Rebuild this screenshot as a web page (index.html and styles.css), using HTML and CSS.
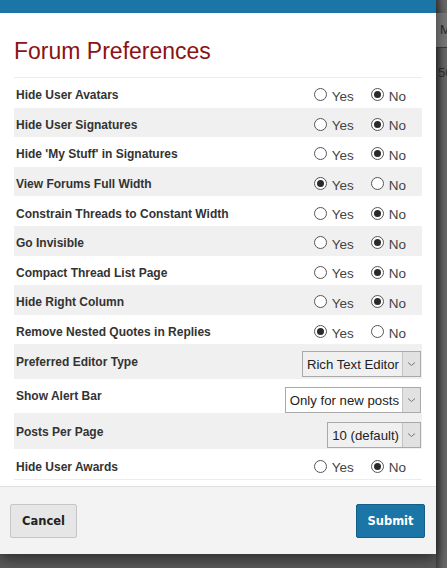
FILE: index.html
```html
<!DOCTYPE html>
<html>
<head>
<meta charset="utf-8">
<link rel="stylesheet" href="styles.css">
</head>
<body>
<div class="page">
  <div class="modal">
    <div class="modal-top"></div>
    <div class="modal-body">
      <h1 class="title">Forum Preferences</h1>
      <div class="prefs">
        <div class="row">
          <span class="label">Hide User Avatars</span>
          <span class="radios"><label class="opt"><input type="radio" name="r1"><span>Yes</span></label><label class="opt"><input type="radio" name="r1" checked><span>No</span></label></span>
        </div>
        <div class="row alt">
          <span class="label">Hide User Signatures</span>
          <span class="radios"><label class="opt"><input type="radio" name="r2"><span>Yes</span></label><label class="opt"><input type="radio" name="r2" checked><span>No</span></label></span>
        </div>
        <div class="row">
          <span class="label">Hide 'My Stuff' in Signatures</span>
          <span class="radios"><label class="opt"><input type="radio" name="r3"><span>Yes</span></label><label class="opt"><input type="radio" name="r3" checked><span>No</span></label></span>
        </div>
        <div class="row alt">
          <span class="label">View Forums Full Width</span>
          <span class="radios"><label class="opt"><input type="radio" name="r4" checked><span>Yes</span></label><label class="opt"><input type="radio" name="r4"><span>No</span></label></span>
        </div>
        <div class="row">
          <span class="label">Constrain Threads to Constant Width</span>
          <span class="radios"><label class="opt"><input type="radio" name="r5"><span>Yes</span></label><label class="opt"><input type="radio" name="r5" checked><span>No</span></label></span>
        </div>
        <div class="row alt">
          <span class="label">Go Invisible</span>
          <span class="radios"><label class="opt"><input type="radio" name="r6"><span>Yes</span></label><label class="opt"><input type="radio" name="r6" checked><span>No</span></label></span>
        </div>
        <div class="row">
          <span class="label">Compact Thread List Page</span>
          <span class="radios"><label class="opt"><input type="radio" name="r7"><span>Yes</span></label><label class="opt"><input type="radio" name="r7" checked><span>No</span></label></span>
        </div>
        <div class="row alt">
          <span class="label">Hide Right Column</span>
          <span class="radios"><label class="opt"><input type="radio" name="r8"><span>Yes</span></label><label class="opt"><input type="radio" name="r8" checked><span>No</span></label></span>
        </div>
        <div class="row">
          <span class="label">Remove Nested Quotes in Replies</span>
          <span class="radios"><label class="opt"><input type="radio" name="r9" checked><span>Yes</span></label><label class="opt"><input type="radio" name="r9"><span>No</span></label></span>
        </div>
        <div class="row alt sel-row s1">
          <span class="label">Preferred Editor Type</span>
          <span class="select"><span class="select-text">Rich Text Editor</span><span class="arrow"><svg width="9" height="6" viewBox="0 0 9 6"><path d="M1 1.5 L4.5 4.5 L8 1.5" fill="none" stroke="#777" stroke-width="1"/></svg></span></span>
        </div>
        <div class="row sel-row s2">
          <span class="label">Show Alert Bar</span>
          <span class="select"><span class="select-text">Only for new posts</span><span class="arrow"><svg width="9" height="6" viewBox="0 0 9 6"><path d="M1 1.5 L4.5 4.5 L8 1.5" fill="none" stroke="#777" stroke-width="1"/></svg></span></span>
        </div>
        <div class="row alt sel-row s3">
          <span class="label">Posts Per Page</span>
          <span class="select"><span class="select-text">10 (default)</span><span class="arrow"><svg width="9" height="6" viewBox="0 0 9 6"><path d="M1 1.5 L4.5 4.5 L8 1.5" fill="none" stroke="#777" stroke-width="1"/></svg></span></span>
        </div>
        <div class="row last">
          <span class="label">Hide User Awards</span>
          <span class="radios"><label class="opt"><input type="radio" name="r10"><span>Yes</span></label><label class="opt"><input type="radio" name="r10" checked><span>No</span></label></span>
        </div>
      </div>
    </div>
    <div class="modal-footer">
      <button class="btn cancel">Cancel</button>
      <button class="btn submit">Submit</button>
    </div>
  </div>
  <div class="backdrop">
    <div class="bd-bar"></div>
    <div class="bd-tab">M</div>
    <div class="bd-line"></div>
    <div class="bd-num">56</div>
  </div>
</div>
</body>
</html>
```

FILE: styles.css
```css
html, body {
  margin: 0;
  padding: 0;
}
body {
  background: #5a5a5a;
  font-family: "Liberation Sans", Arial, sans-serif;
  width: 447px;
  height: 568px;
  overflow: hidden;
}
.page {
  display: flex;
  align-items: flex-start;
  height: 568px;
}
.modal {
  width: 436px;
  flex: none;
  background: #fff;
  box-shadow: 0 4px 14px rgba(0,0,0,0.55);
  position: relative;
  z-index: 1;
  display: flex;
  flex-direction: column;
}
.modal-top {
  height: 13px;
  background: #1b76a7;
}
.modal-body {
  padding: 0 14px 6px 14px;
}
.title {
  margin: 0;
  padding: 25px 0 12px 0;
  font-size: 23px;
  line-height: 27px;
  font-weight: normal;
  color: #8b1313;
  border-bottom: 1px solid #ececec;
}
.prefs {
  width: 408px;
  border-bottom: 1px solid #ececec;
}
.row {
  display: flex;
  align-items: center;
  justify-content: space-between;
  height: 29.6px;
  padding: 0 0 0 2px;
}
.row.alt {
  background: #f0f0f0;
}
.label {
  font-size: 12px;
  font-weight: bold;
  color: #333;
  padding-top: 5px;
}
.sel-row {
  align-items: flex-start;
}
.s1 { height: 35px; }
.s2 { height: 34px; }
.s3 { height: 36px; }
.s1 .label { padding-top: 11px; }
.s2 .label { padding-top: 10px; }
.s3 .label { padding-top: 12px; }
.s1 .select { margin-top: 7px; }
.s2 .select { margin-top: 8px; }
.s3 .select { margin-top: 9px; }
.radios {
  display: flex;
  padding-right: 16px;
  padding-top: 4px;
}
.opt {
  display: flex;
  align-items: center;
  font-size: 13.5px;
  color: #444;
}
.opt + .opt {
  margin-left: 17px;
}
.opt span {
  padding-top: 3px;
}
.opt input {
  appearance: none;
  -webkit-appearance: none;
  width: 13px;
  height: 13px;
  margin: 0 5px 0 0;
  border: 1px solid #555;
  border-radius: 50%;
  background: #fff;
  position: relative;
  box-sizing: border-box;
}
.opt input:checked::after {
  content: "";
  position: absolute;
  left: 2px;
  top: 2px;
  width: 7px;
  height: 7px;
  border-radius: 50%;
  background: #2a2a2a;
}
.select {
  display: flex;
  align-items: stretch;
  height: 26px;
  border: 1px solid #a9a9a9;
  box-sizing: border-box;
  margin-right: 1px;
  font-size: 13.2px;
  color: #222;
}
.select-text {
  display: flex;
  align-items: center;
  padding: 1px 3px 0 4px;
}
.arrow {
  width: 17px;
  border-left: 1px solid #c4c4c4;
  background: #e1e1e1;
  display: flex;
  align-items: center;
  justify-content: center;
}
.modal-footer {
  background: #f3f3f3;
  border-top: 1px solid #e0e0e0;
  height: 67px;
  display: flex;
  align-items: center;
  justify-content: space-between;
  padding: 0 11px 0 10px;
}
.btn {
  font-family: "DejaVu Sans", Verdana, sans-serif;
  font-weight: bold;
  font-size: 11.5px;
  height: 34px;
  border-radius: 2px;
  cursor: pointer;
  margin-top: 2px;
}
.cancel {
  width: 67px;
  background: #e6e6e6;
  border: 1px solid #c6c6c6;
  color: #222;
}
.submit {
  width: 69px;
  background: #1b76a7;
  border: 1px solid #145f8a;
  color: #fff;
}
.backdrop {
  flex: 1;
  height: 568px;
  background: linear-gradient(to right, #3f3f3f, #626262 60%, #6a6a6a);
  position: relative;
  overflow: hidden;
  font-family: "Liberation Sans", Arial, sans-serif;
}
.bd-bar {
  height: 13px;
}
.bd-tab {
  height: 34px;
  background: #7a7a7a;
  color: #2b2b2b;
  font-size: 13px;
  line-height: 34px;
  padding-left: 4px;
  border-bottom: 1px solid #3a3a3a;
}
.bd-line {
  height: 1px;
}
.bd-num {
  margin-top: 16px;
  color: #2e2e2e;
  font-size: 13px;
  padding-left: 2px;
}
```
